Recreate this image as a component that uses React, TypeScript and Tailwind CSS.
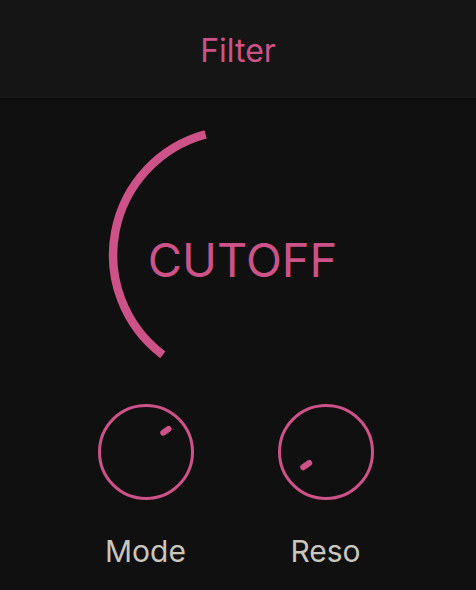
import React from 'react'

const PINK = '#cc5287'

// small knob: ring + short indicator line
const Knob = ({ x1, y1, x2, y2 }: { x1: number; y1: number; x2: number; y2: number }) => {
  return (
    <svg width="96" height="96" viewBox="0 0 96 96">
      <circle cx="48" cy="48" r="46.5" fill="none" stroke={PINK} strokeWidth="3" />
      <line x1={x1} y1={y1} x2={x2} y2={y2} stroke={PINK} strokeWidth="6" strokeLinecap="round" />
    </svg>
  )
}

const App = () => {
  return (
    <div className="w-[476px] h-[590px] bg-[#101010] flex flex-col font-['Inter',sans-serif] overflow-hidden">
      <header className="h-[100px] pt-[4px] bg-[#151515] border-b-2 border-[#0c0c0c] flex items-center justify-center">
        <h1 className="text-[32px] leading-none text-[#cc5287]">Filter</h1>
      </header>

      <div className="mt-[25px] grid place-items-center">
        <svg className="col-start-1 row-start-1" width="260" height="260" viewBox="0 0 260 260">
          <path d="M 54.8 229.8 A 125 125 0 0 1 97.6 9.3" fill="none" stroke={PINK} strokeWidth="8.5" />
        </svg>
        <div className="col-start-1 row-start-1 text-[47px] leading-none text-[#cc5287] pl-[9px] pt-[8px]">CUTOFF</div>
      </div>

      <div className="mt-[19px] flex justify-center gap-[84px] pr-[5px]">
        <div className="flex flex-col items-center">
          <Knob x1={65.2} y1={28.7} x2={70.5} y2={25} />
          <span className="mt-[36px] text-[30px] leading-none text-[#c9c6bd]">Mode</span>
        </div>
        <div className="flex flex-col items-center">
          <Knob x1={25.2} y1={63.3} x2={31.2} y2={59} />
          <span className="mt-[36px] text-[30px] leading-none text-[#c9c6bd]">Reso</span>
        </div>
      </div>
    </div>
  )
}

export default App
